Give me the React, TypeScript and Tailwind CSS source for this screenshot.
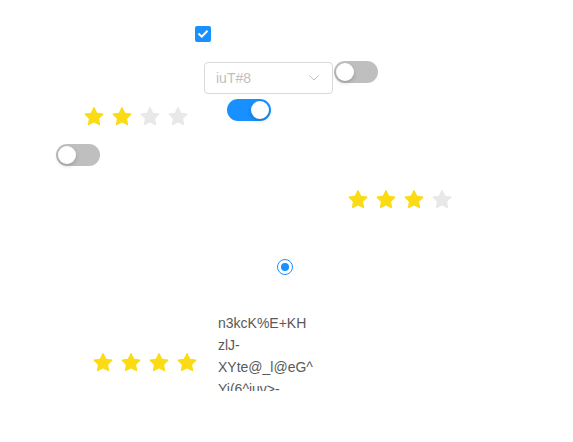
const STAR =
  'M908.1 353.1l-253.9-36.9L540.7 86.1c-3.1-6.3-8.2-11.4-14.5-14.5-15.8-7.8-35-1.3-42.9 14.5L369.8 316.2l-253.9 36.9c-7 1-13.4 4.3-18.3 9.3a32.05 32.05 0 00.6 45.3l183.7 179.1-43.4 252.9a31.95 31.95 0 0046.4 33.7L512 754l227.1 119.4c6.2 3.3 13.4 4.4 20.3 3.2 17.4-3 29.1-19.5 26.1-36.9l-43.4-252.9 183.7-179.1c5-4.9 8.3-11.3 9.3-18.3 2.7-17.5-9.5-33.7-27-36.3z';

function Rate({ value, className }: { value: number; className: string }) {
  return (
    <div className={`absolute flex gap-2 ${className}`}>
      {[0, 1, 2, 3].map((i) => (
        <svg key={i} viewBox="64 64 896 896" className="w-5 h-5" fill={i < value ? '#fadb14' : '#e8e8e8'}>
          <path d={STAR} />
        </svg>
      ))}
    </div>
  );
}

function Switch({ on, className }: { on?: boolean; className: string }) {
  return (
    <div
      className={`absolute w-[44px] h-[22px] rounded-full ${on ? 'bg-[#1890ff]' : 'bg-[#bfbfbf]'} ${className}`}
    >
      <div
        className={`absolute top-[2px] w-[18px] h-[18px] rounded-full bg-white shadow-[0_2px_4px_rgba(0,35,11,0.2)] ${on ? 'left-[24px]' : 'left-[2px]'}`}
      />
    </div>
  );
}

export default function App() {
  return (
    <div className="relative w-[573px] h-[442px] bg-white overflow-hidden font-['Liberation_Sans',Arial,sans-serif] text-sm">
      {/* checkbox */}
      <div className="absolute left-[195px] top-[26px] w-4 h-4 rounded-[2px] bg-[#1890ff] flex items-center justify-center">
        <svg viewBox="0 0 16 16" className="w-4 h-4">
          <path d="M4.2 8.2l2.6 2.5 5-5.2" stroke="white" strokeWidth="2" fill="none" strokeLinecap="square" />
        </svg>
      </div>

      {/* select */}
      <div className="absolute left-[204px] top-[62px] w-[129px] h-8 rounded border border-[#d9d9d9] bg-white flex items-center pl-[11px] pr-[13px]">
        <span className="flex-1 text-[#bfbfbf]">iuT#8</span>
        <svg viewBox="0 0 10 6" className="w-[10px] h-[6px]">
          <path d="M0.5 0.5L5 5l4.5-4.5" stroke="#bfbfbf" strokeWidth="1" fill="none" />
        </svg>
      </div>

      <Switch className="left-[334px] top-[61px]" />
      <Switch on className="left-[227px] top-[99px]" />
      <Switch className="left-[56px] top-[144px]" />

      <Rate value={2} className="left-[84px] top-[107px]" />
      <Rate value={3} className="left-[348px] top-[190px]" />
      <Rate value={4} className="left-[93px] top-[353px]" />

      {/* radio */}
      <div className="absolute left-[277px] top-[259px] w-4 h-4 rounded-full border border-[#1890ff] flex items-center justify-center">
        <div className="w-2 h-2 rounded-full bg-[#1890ff]" />
      </div>

      {/* text */}
      <div className="absolute left-[218px] top-[312px] w-[100px] h-[79px] overflow-hidden text-[#595959] leading-[22px]">
        <div>n3kcK%E+KH</div>
        <div>zlJ-</div>
        <div>XYte@_l@eG^</div>
        <div>Yi(6^iuv&gt;-</div>
      </div>
    </div>
  );
}
